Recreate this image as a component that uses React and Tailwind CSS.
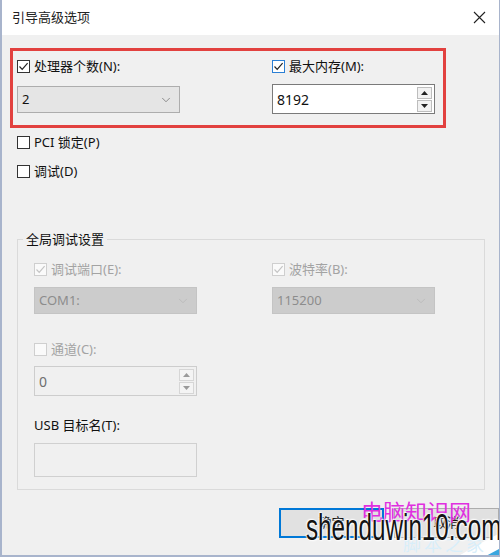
import { ChevronDown } from "lucide-react";

const font = "font-['Noto_Sans','Noto_Sans_CJK_SC',sans-serif]";

const CheckBox = ({ checked, disabled, focus }) => {
  let box = "border-[#333] bg-white";
  if (focus) box = "border-[#2b7fd4] bg-white";
  if (disabled) box = "border-[#cfcfcf] bg-[#fafafa]";
  return (
    <span className={`w-[13px] h-[13px] border flex items-center justify-center shrink-0 ${box}`}>
      {checked && (
        <svg width="11" height="11" viewBox="0 0 11 11">
          <path
            d="M1.5 5.5 L4.2 8.3 L9.6 2.2"
            fill="none"
            stroke={disabled ? "#c4c4c4" : "#222"}
            strokeWidth="1.2"
          />
        </svg>
      )}
    </span>
  );
};

const CheckRow = ({ label, checked, disabled, focus }) => (
  <div className="h-[13px] flex items-center gap-[4px]">
    <CheckBox checked={checked} disabled={disabled} focus={focus} />
    <span className={`text-[13px] leading-none whitespace-nowrap ${disabled ? "text-[#a3a3a3]" : "text-[#111]"}`}>
      {label}
    </span>
  </div>
);

const Select = ({ value, disabled }) => (
  <div
    className={`w-[163px] h-[27px] border flex items-center justify-between pl-[4px] pr-[6px] ${
      disabled ? "bg-[#cccccc] border-[#c4c4c4] text-[#8c8c8c]" : "bg-[#e5e5e5] border-[#adadad] text-[#111]"
    }`}
  >
    <span className="text-[13px]">{value}</span>
    <ChevronDown size={14} strokeWidth={1.2} className={disabled ? "text-[#b5b5b5]" : "text-[#666]"} />
  </div>
);

const Spin = ({ value, disabled }) => (
  <div
    className={`w-[163px] h-[30px] border flex items-center justify-between pl-[4px] pr-[2px] ${
      disabled ? "bg-[#f0f0f0] border-[#cdcdcd] text-[#6e6e6e]" : "bg-white border-[#7a7a7a] text-[#111]"
    }`}
  >
    <span className="text-[14px]">{value}</span>
    <div className="flex flex-col gap-[1px]">
      {[0, 1].map((i) => (
        <div
          key={i}
          className={`w-[15px] h-[12px] border flex items-center justify-center ${
            disabled ? "border-[#d6d6d6] bg-[#f4f4f4]" : "border-[#bdbdbd] bg-[#f2f2f2]"
          }`}
        >
          <svg width="7" height="4" viewBox="0 0 7 4">
            <path
              d={i === 0 ? "M0 4 L3.5 0 L7 4 Z" : "M0 0 L3.5 4 L7 0 Z"}
              fill={disabled ? "#9a9a9a" : "#222"}
            />
          </svg>
        </div>
      ))}
    </div>
  </div>
);

export default function App() {
  return (
    <div className={`relative w-[500px] h-[557px] overflow-hidden bg-[#f0f0f0] border-l-2 border-b-2 border-r border-[#a8b4cc] ${font}`}>
      <div className="h-[35px] bg-white flex items-center justify-between pl-[10px] pr-[13px]">
        <span className="text-[13px] text-[#222]">引导高级选项</span>
        <svg width="13" height="13" viewBox="0 0 13 13">
          <path d="M1 1 L12 12 M12 1 L1 12" stroke="#222" strokeWidth="1.1" />
        </svg>
      </div>

      <div className="ml-[8px] mt-[13px] w-[436px] h-[80px] border-[3px] border-[#e2413f] pl-[4px] pt-[9px] flex">
        <div className="w-[255px]">
          <CheckRow label="处理器个数(N):" checked />
          <div className="mt-[13px]">
            <Select value="2" />
          </div>
        </div>
        <div>
          <CheckRow label="最大内存(M):" checked focus />
          <div className="mt-[11px]">
            <Spin value="8192" />
          </div>
        </div>
      </div>

      <div className="ml-[15px] mt-[8px]">
        <CheckRow label="PCI 锁定(P)" />
        <div className="mt-[16px]">
          <CheckRow label="调试(D)" />
        </div>
      </div>

      <fieldset className="ml-[15px] mt-[52px] w-[468px] border border-[#dadada] pb-[12px]">
        <legend className="ml-[5px] px-[3px] text-[13px] leading-[18px] text-[#111]">全局调试设置</legend>
        <div className="pl-[16px]">
          <div className="mt-[15px] flex">
            <div className="w-[238px]">
              <CheckRow label="调试端口(E):" checked disabled />
              <div className="mt-[11px]">
                <Select value="COM1:" disabled />
              </div>
            </div>
            <div>
              <CheckRow label="波特率(B):" checked disabled />
              <div className="mt-[11px]">
                <Select value="115200" disabled />
              </div>
            </div>
          </div>
          <div className="mt-[29px]">
            <CheckRow label="通道(C):" disabled />
          </div>
          <div className="mt-[10px]">
            <Spin value="0" disabled />
          </div>
          <div className="mt-[23px] h-[13px] flex items-center text-[13px] text-[#111]">USB 目标名(T):</div>
          <div className="mt-[11px] w-[163px] h-[34px] border border-[#d0d0d0] bg-[#f0f0f0]" />
        </div>
      </fieldset>

      <div className="mt-[18px] ml-[277px] flex gap-[10px]">
        <button className="w-[106px] h-[30px] border-2 border-[#0078d7] bg-[#e1e1e1] text-[13px] text-[#111]">确定</button>
        <button className="w-[106px] h-[30px] border border-[#adadad] bg-[#e1e1e1] text-[13px] text-[#111]">取消</button>
      </div>

      {/* watermark overlay: curved white band + blue corner */}
      <div className="absolute right-0 bottom-0 w-[200px] h-[80px] overflow-hidden pointer-events-none">
        <div className="absolute left-[38px] top-[4px] w-[420px] h-[260px] rounded-tl-[100%] bg-[#ffffff]" />
        <div className="absolute left-[52px] top-[12px] w-[420px] h-[260px] rounded-tl-[100%] bg-[#3aa6df]" />
        <span className="absolute left-[104px] bottom-[3px] text-[18px] leading-none text-[#d8eefa] font-['Noto_Sans_CJK_SC',sans-serif] tracking-[3px]">
          脚本之家
        </span>
        <span className="absolute left-[62px] top-[24px] text-[22px] leading-none text-[#e030e0] font-['Noto_Sans_CJK_SC',sans-serif]">
          电脑知识网
        </span>
      </div>
      <div className="absolute left-[304px] top-[509px] w-[196px] pointer-events-none">
        <span className="block origin-left scale-x-[0.655] text-[37px] leading-none text-[#141414] font-['Liberation_Sans',sans-serif] whitespace-nowrap [text-shadow:0_0_2px_#fff,0_0_2px_#fff,1px_1px_2px_#fff,-1px_-1px_2px_#fff]">
          shenduwin10.com
        </span>
      </div>
    </div>
  );
}
